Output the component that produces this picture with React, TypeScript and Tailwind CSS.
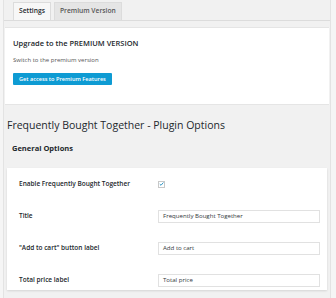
const font = { fontFamily: '"Open Sans", "Noto Sans", sans-serif' };

function Row({ label, first, children }: { label: string; first?: boolean; children: React.ReactNode }) {
  return (
    <div className={`flex items-center ${first ? 'h-[32px]' : 'h-[32px]'}`}>
      <div className="w-[151px] pl-[12px] text-[6.5px] font-semibold text-[#23282d]">{label}</div>
      <div className="flex-1">{children}</div>
    </div>
  );
}

function TextField({ value }: { value: string }) {
  return (
    <div className="w-[162px] h-[13px] border border-[#e1e1e1] bg-white flex items-center px-[4px] text-[6.1px] text-[#32373c]">
      {value}
    </div>
  );
}

export default function App() {
  return (
    <div style={font} className="w-[336px] h-[298px] bg-[#f5f5f5] overflow-hidden">
      <div className="ml-[3px] w-[328px] h-[298px] bg-[#f1f1f1] border-x border-[#e3e3e3]">
        {/* tabs */}
        <div className="flex items-end gap-[3px] pl-[9px] pt-[3px] h-[21px] border-b border-[#dcdcdc]">
          <div className="h-[18px] px-[5px] flex items-center bg-[#f7f7f7] border border-b-0 border-[#dcdcdc] text-[6.7px] font-semibold text-[#23282d]">
            Settings
          </div>
          <div className="h-[18px] px-[5px] flex items-center bg-[#e5e5e5] border border-b-0 border-[#dcdcdc] text-[6.7px] font-semibold text-[#555]">
            Premium Version
          </div>
        </div>

        {/* premium box */}
        <div className="mt-[6px] mx-[1px] bg-white border-y border-[#e5e5e5] h-[78px] px-[8px] pt-[12px]">
          <div className="text-[7.5px] font-semibold text-[#23282d] leading-none">Upgrade to the PREMIUM VERSION</div>
          <div className="mt-[9px] text-[6px] text-[#555] leading-none">Switch to the premium version</div>
          <div className="mt-[6px] inline-flex items-center h-[12px] px-[6px] bg-[#0e9bd3] rounded-[1px] text-[5.6px] font-semibold text-white">
            Get access to Premium Features
          </div>
        </div>

        <div className="pl-[3px] mt-[15px] text-[10.5px] text-[#23282d] leading-none">
          Frequently Bought Together - Plugin Options
        </div>
        <div className="pl-[8px] mt-[14px] text-[7.5px] font-bold text-[#23282d] leading-none">General Options</div>

        <div className="mt-[16px] mx-[3px] h-[122px] overflow-hidden bg-white shadow-[0_1px_2px_rgba(0,0,0,0.12)]">
          <Row label="Enable Frequently Bought Together" first>
            <div className="w-[7px] h-[7px] border border-[#c8c8c8] bg-white flex items-center justify-center">
              <svg viewBox="0 0 10 10" className="w-[6px] h-[6px]">
                <path d="M1.5 5.2 L4 7.6 L8.8 2" fill="none" stroke="#1e8cbe" strokeWidth="1.8" />
              </svg>
            </div>
          </Row>
          <Row label="Title">
            <TextField value="Frequently Bought Together" />
          </Row>
          <Row label={'"Add to cart" button label'}>
            <TextField value="Add to cart" />
          </Row>
          <Row label="Total price label">
            <TextField value="Total price" />
          </Row>
        </div>
      </div>
    </div>
  );
}
